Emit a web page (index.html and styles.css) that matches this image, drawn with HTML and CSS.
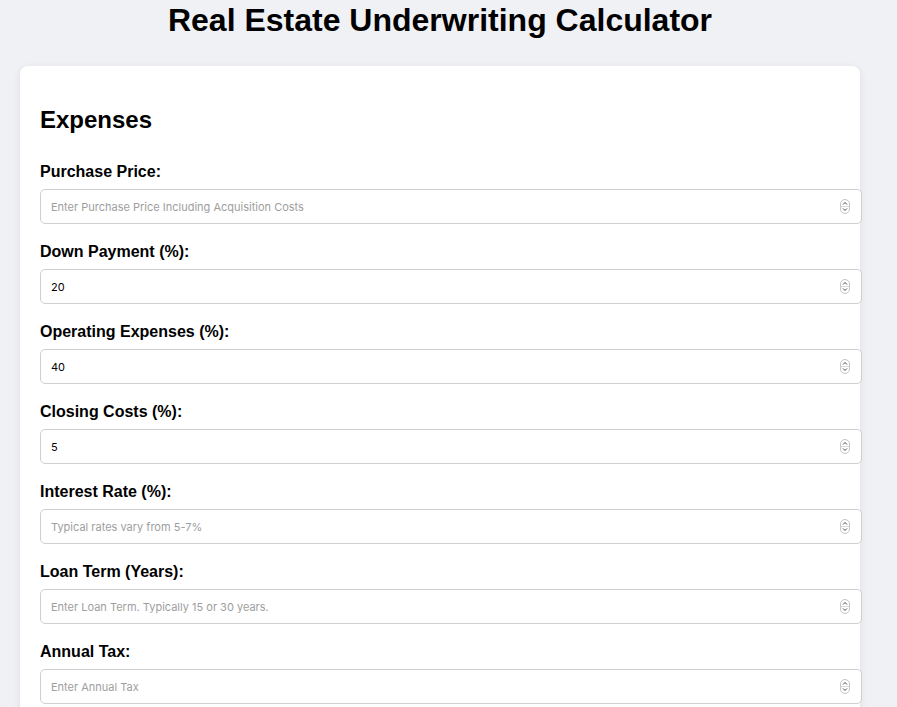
FILE: index.html
```html
<!DOCTYPE html>
<html>
<head>
<meta charset="utf-8">
<link rel="stylesheet" href="styles.css">
</head>
<body>
<div class="container">
  <h1 class="title">Real Estate Underwriting Calculator</h1>
  <div class="card">
    <h2 class="section-title">Expenses</h2>
    <div class="field">
      <label class="label">Purchase Price:</label>
      <div class="input-wrap"><input class="input" type="text" placeholder="Enter Purchase Price Including Acquisition Costs"><svg class="spin" viewBox="0 0 10 15"><rect x="0.5" y="0.5" width="9" height="14" rx="4.5" fill="#fff" stroke="#c4c4c4"/><line x1="1" y1="7.5" x2="9" y2="7.5" stroke="#d8d8d8"/><path d="M3 5.5 L5 3.5 L7 5.5" fill="none" stroke="#444" stroke-width="1"/><path d="M3 9.5 L5 11.5 L7 9.5" fill="none" stroke="#444" stroke-width="1"/></svg></div>
    </div>
    <div class="field">
      <label class="label">Down Payment (%):</label>
      <div class="input-wrap"><input class="input" type="text" value="20"><svg class="spin" viewBox="0 0 10 15"><rect x="0.5" y="0.5" width="9" height="14" rx="4.5" fill="#fff" stroke="#c4c4c4"/><line x1="1" y1="7.5" x2="9" y2="7.5" stroke="#d8d8d8"/><path d="M3 5.5 L5 3.5 L7 5.5" fill="none" stroke="#444" stroke-width="1"/><path d="M3 9.5 L5 11.5 L7 9.5" fill="none" stroke="#444" stroke-width="1"/></svg></div>
    </div>
    <div class="field">
      <label class="label">Operating Expenses (%):</label>
      <div class="input-wrap"><input class="input" type="text" value="40"><svg class="spin" viewBox="0 0 10 15"><rect x="0.5" y="0.5" width="9" height="14" rx="4.5" fill="#fff" stroke="#c4c4c4"/><line x1="1" y1="7.5" x2="9" y2="7.5" stroke="#d8d8d8"/><path d="M3 5.5 L5 3.5 L7 5.5" fill="none" stroke="#444" stroke-width="1"/><path d="M3 9.5 L5 11.5 L7 9.5" fill="none" stroke="#444" stroke-width="1"/></svg></div>
    </div>
    <div class="field">
      <label class="label">Closing Costs (%):</label>
      <div class="input-wrap"><input class="input" type="text" value="5"><svg class="spin" viewBox="0 0 10 15"><rect x="0.5" y="0.5" width="9" height="14" rx="4.5" fill="#fff" stroke="#c4c4c4"/><line x1="1" y1="7.5" x2="9" y2="7.5" stroke="#d8d8d8"/><path d="M3 5.5 L5 3.5 L7 5.5" fill="none" stroke="#444" stroke-width="1"/><path d="M3 9.5 L5 11.5 L7 9.5" fill="none" stroke="#444" stroke-width="1"/></svg></div>
    </div>
    <div class="field">
      <label class="label">Interest Rate (%):</label>
      <div class="input-wrap"><input class="input" type="text" placeholder="Typical rates vary from 5-7%"><svg class="spin" viewBox="0 0 10 15"><rect x="0.5" y="0.5" width="9" height="14" rx="4.5" fill="#fff" stroke="#c4c4c4"/><line x1="1" y1="7.5" x2="9" y2="7.5" stroke="#d8d8d8"/><path d="M3 5.5 L5 3.5 L7 5.5" fill="none" stroke="#444" stroke-width="1"/><path d="M3 9.5 L5 11.5 L7 9.5" fill="none" stroke="#444" stroke-width="1"/></svg></div>
    </div>
    <div class="field">
      <label class="label">Loan Term (Years):</label>
      <div class="input-wrap"><input class="input" type="text" placeholder="Enter Loan Term. Typically 15 or 30 years."><svg class="spin" viewBox="0 0 10 15"><rect x="0.5" y="0.5" width="9" height="14" rx="4.5" fill="#fff" stroke="#c4c4c4"/><line x1="1" y1="7.5" x2="9" y2="7.5" stroke="#d8d8d8"/><path d="M3 5.5 L5 3.5 L7 5.5" fill="none" stroke="#444" stroke-width="1"/><path d="M3 9.5 L5 11.5 L7 9.5" fill="none" stroke="#444" stroke-width="1"/></svg></div>
    </div>
    <div class="field">
      <label class="label">Annual Tax:</label>
      <div class="input-wrap"><input class="input" type="text" placeholder="Enter Annual Tax"><svg class="spin" viewBox="0 0 10 15"><rect x="0.5" y="0.5" width="9" height="14" rx="4.5" fill="#fff" stroke="#c4c4c4"/><line x1="1" y1="7.5" x2="9" y2="7.5" stroke="#d8d8d8"/><path d="M3 5.5 L5 3.5 L7 5.5" fill="none" stroke="#444" stroke-width="1"/><path d="M3 9.5 L5 11.5 L7 9.5" fill="none" stroke="#444" stroke-width="1"/></svg></div>
    </div>
  </div>
</div>
</body>
</html>
```

FILE: styles.css
```css
html, body {
  margin: 0;
  padding: 0;
  background: #f0f1f5;
  font-family: "Liberation Sans", Arial, sans-serif;
  color: #000;
}
.container {
  width: 840px;
  margin: 0 0 0 20px;
}
.title {
  margin: 0;
  font-size: 32px;
  line-height: 40px;
  font-weight: bold;
  text-align: center;
}
.card {
  margin-top: 26px;
  background: #fff;
  border-radius: 8px;
  box-shadow: 0 2px 8px rgba(0, 0, 0, 0.08);
  padding: 20px;
}
.section-title {
  margin: 20px 0 29px;
  font-size: 24px;
  line-height: 28px;
  font-weight: bold;
}
.field {
  margin-bottom: 19px;
}
.label {
  display: block;
  font-size: 16px;
  line-height: 18px;
  font-weight: bold;
  margin-bottom: 8px;
}
.input-wrap {
  position: relative;
  width: 822px;
}
.input {
  display: block;
  box-sizing: border-box;
  width: 822px;
  height: 35px;
  padding: 10px;
  border: 1px solid #cfcfcf;
  border-radius: 5px;
  font-family: Inter, "Liberation Sans", Arial, sans-serif;
  font-size: 11px;
  color: #000;
  background: #fff;
  outline: none;
}
.input::placeholder {
  color: #9e9e9e;
}
.spin {
  position: absolute;
  right: 12px;
  top: 10px;
  width: 10px;
  height: 15px;
}
```
